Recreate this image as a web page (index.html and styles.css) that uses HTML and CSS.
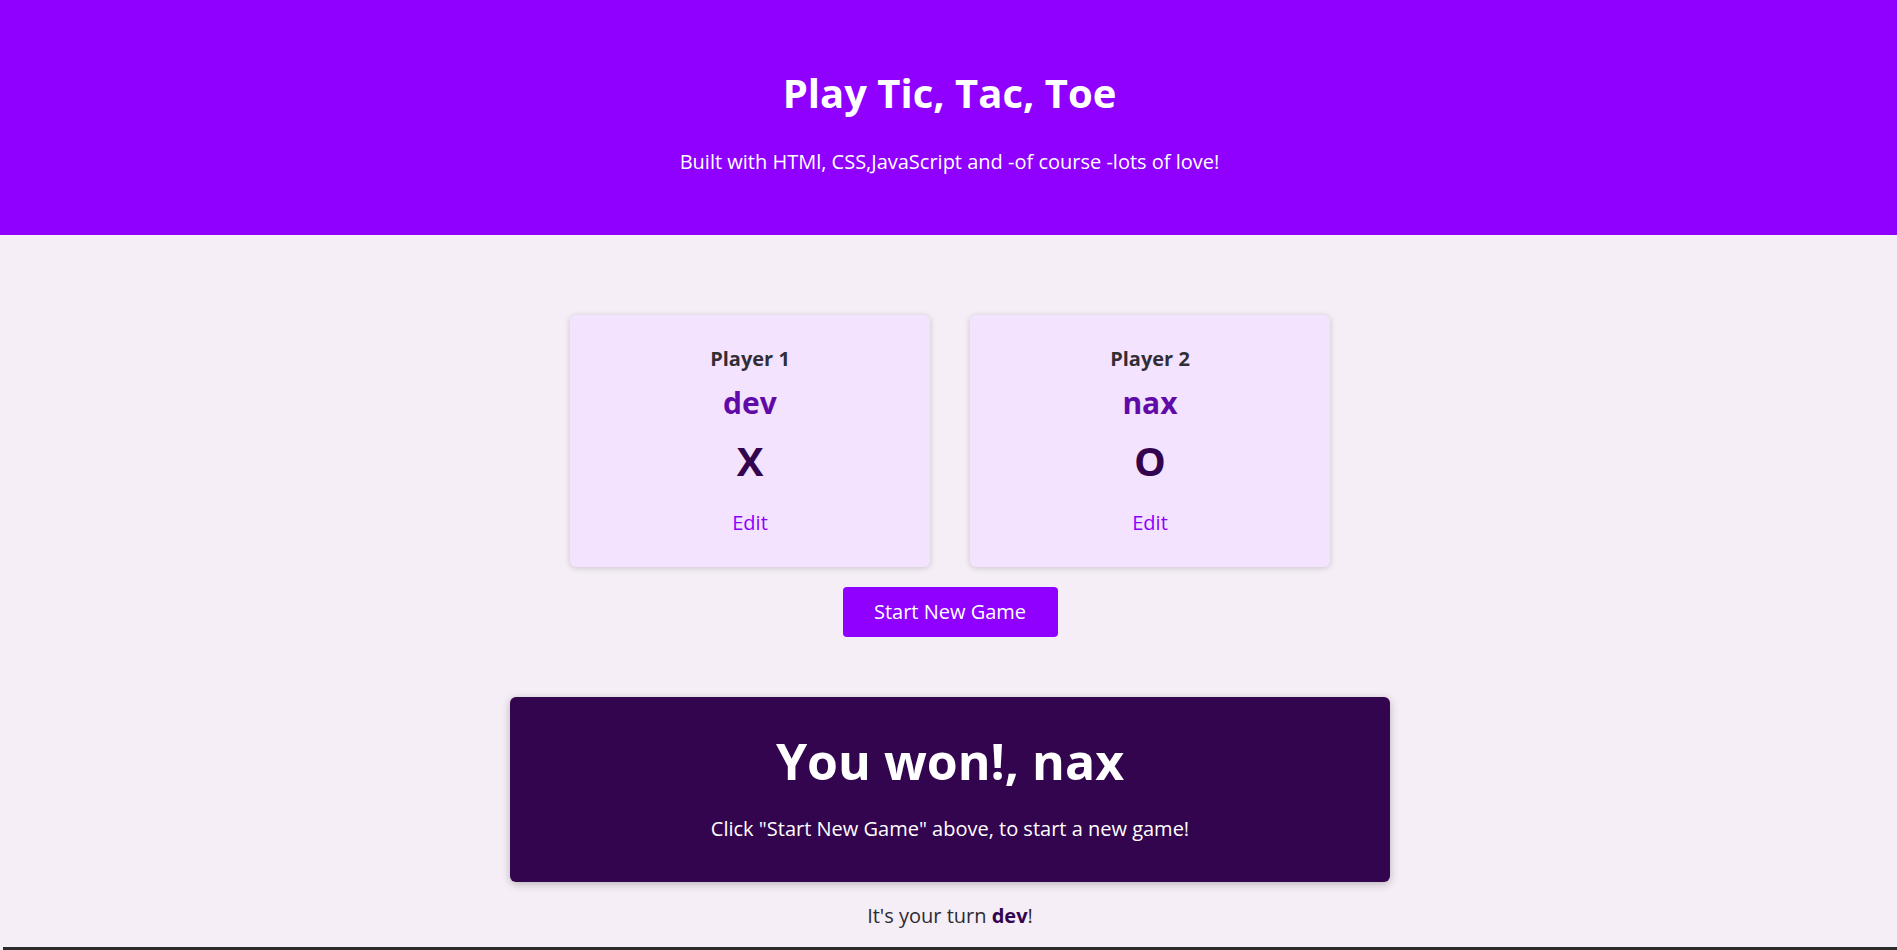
FILE: index.html
```html
<!DOCTYPE html>
<html lang="en">
<head>
<meta charset="utf-8">
<title>Tic Tac Toe</title>
<link rel="stylesheet" href="styles.css">
</head>
<body>
<header class="main-header">
  <h1 class="main-title">Play Tic, Tac, Toe</h1>
  <p class="main-subtitle">Built with HTMl, CSS,JavaScript and -of course -lots of love!</p>
</header>
<main class="main">
  <ol class="players">
    <li class="player-card">
      <h2 class="player-label">Player 1</h2>
      <h3 class="player-name">dev</h3>
      <p class="player-symbol">X</p>
      <button class="edit-btn">Edit</button>
    </li>
    <li class="player-card">
      <h2 class="player-label">Player 2</h2>
      <h3 class="player-name">nax</h3>
      <p class="player-symbol">O</p>
      <button class="edit-btn">Edit</button>
    </li>
  </ol>
  <button class="start-btn">Start New Game</button>
  <section class="game-over">
    <h2 class="game-over-title">You won!, nax</h2>
    <p class="game-over-text">Click "Start New Game" above, to start a new game!</p>
  </section>
  <p class="turn">It's your turn <span class="turn-name">dev</span>!</p>
  <ol class="board"></ol>
</main>
</body>
</html>
```

FILE: styles.css
```css
* {
  box-sizing: border-box;
}

html {
  font-family: "Open Sans", sans-serif;
}

body {
  margin: 0;
  background-color: #f5eef6;
  color: #2d2a33;
  line-height: 1.362;
}

.main-header {
  background-color: #8f00ff;
  color: #ffffff;
  text-align: center;
  padding: 66px 0 59px 2px;
}

.main-title {
  margin: 0 0 28px;
  font-size: 40px;
  font-weight: 700;
  line-height: 1.362;
}

.main-subtitle {
  margin: 0;
  font-size: 20px;
}

.main {
  display: flex;
  flex-direction: column;
  align-items: center;
  padding-left: 3px;
}

.players {
  list-style: none;
  margin: 80px 0 0;
  padding: 0;
  display: flex;
  gap: 40px;
}

.player-card {
  width: 360px;
  height: 252px;
  background-color: #f3e3fe;
  border-radius: 6px;
  box-shadow: 0 1px 6px rgba(0, 0, 0, 0.18);
  text-align: center;
  padding-top: 30.6px;
  display: flex;
  flex-direction: column;
  align-items: center;
}

.player-label {
  margin: 0;
  font-size: 20px;
  font-weight: 700;
  color: #322e36;
  line-height: 1.362;
}

.player-name {
  margin: 10.5px 0 0;
  font-size: 30px;
  font-weight: 700;
  color: #600ba8;
  line-height: 1.362;
}

.player-symbol {
  margin: 10.4px 0 0;
  font-size: 40px;
  font-weight: 700;
  color: #33054f;
  line-height: 1.362;
}

.edit-btn {
  margin-top: 20px;
  font: inherit;
  font-size: 20px;
  line-height: 1.362;
  color: #8f00ff;
  background: none;
  border: none;
  padding: 0;
  cursor: pointer;
}

.start-btn {
  margin-top: 20px;
  width: 215px;
  height: 50px;
  font: inherit;
  font-size: 20px;
  color: #ffffff;
  background-color: #8f00ff;
  border: none;
  border-radius: 4px;
  cursor: pointer;
}

.game-over {
  margin-top: 60px;
  width: 880px;
  height: 185px;
  background-color: #33054f;
  color: #ffffff;
  border-radius: 6px;
  box-shadow: 0 2px 8px rgba(0, 0, 0, 0.25);
  text-align: center;
  padding-top: 30.5px;
}

.game-over-title {
  margin: 0;
  font-size: 50px;
  font-weight: 700;
  line-height: 1.362;
}

.game-over-text {
  margin: 19.5px 0 0;
  font-size: 20px;
}

.turn {
  margin: 20.6px 0 0;
  font-size: 20px;
  color: #2d2a33;
}

.turn-name {
  font-weight: 700;
  color: #33054f;
}

.board {
  list-style: none;
  margin: 17px 0 0;
  padding: 0;
  width: 100%;
  height: 200px;
  border-top: 3px solid #2b2b2b;
}
```
